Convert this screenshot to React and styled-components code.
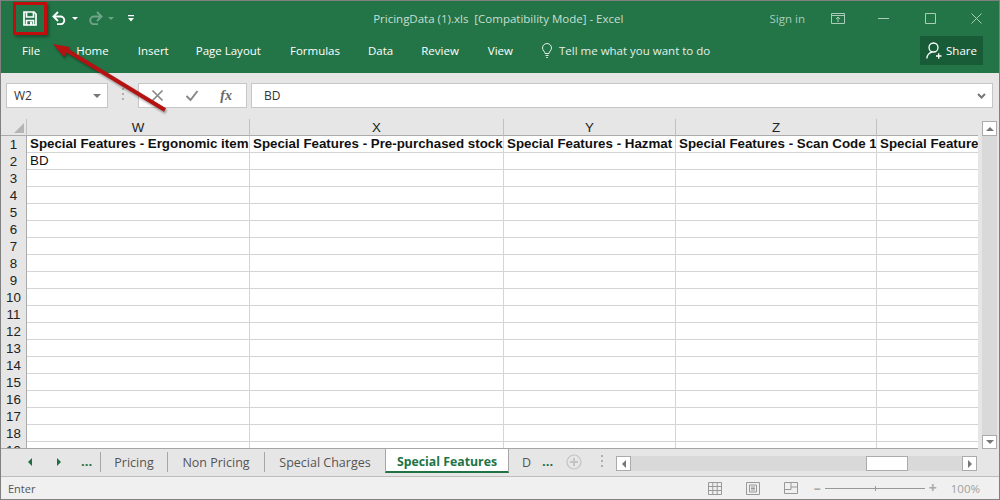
import React from "react";
import styled, { createGlobalStyle } from "styled-components";

const GlobalStyle = createGlobalStyle`
  html, body { margin: 0; padding: 0; background: #e6e6e6; overflow: hidden; }
`;

const Win = styled.div`
  position: relative;
  width: 1000px;
  height: 500px;
  box-sizing: border-box;
  border: 1px solid #808080;
  display: flex;
  flex-direction: column;
  font-family: "Open Sans", "Noto Sans", sans-serif;
  overflow: hidden;
`;

const Ribbon = styled.div`
  height: 72px;
  background: #237548;
  color: #fff;
  display: flex;
  flex-direction: column;
  flex: none;
`;

const TitleRow = styled.div`
  height: 34px;
  display: flex;
  align-items: center;
  position: relative;
`;

const Qat = styled.div`
  display: flex;
  align-items: center;
  padding-left: 22px;
  height: 100%;
`;

const QatBtn = styled.span`
  display: inline-flex;
  align-items: center;
  margin-right: ${(p) => p.$mr || 0}px;
  opacity: ${(p) => (p.$dim ? 0.35 : 1)};
`;

const DocTitle = styled.div`
  flex: 1;
  text-align: center;
  font-size: 11.5px;
  color: #c9dfd2;
  padding-left: 93px;
  white-space: pre;
`;

const WinControls = styled.div`
  display: flex;
  align-items: center;
  color: #a9cdb8;
`;

const SignIn = styled.span`
  font-size: 11.5px;
  margin-right: 26px;
`;

const CtlIcon = styled.svg`
  display: block;
  margin-right: ${(p) => p.$mr}px;
`;

const MenuRow = styled.div`
  flex: 1;
  display: flex;
  align-items: center;
  position: relative;
  padding: 0 0 8px 21px;
  font-size: 11.5px;
`;

const MenuItem = styled.span`
  margin-right: ${(p) => p.$mr}px;
  white-space: nowrap;
`;

const TellMe = styled.span`
  display: inline-flex;
  align-items: center;
  gap: 6px;
  color: #e4efe9;
`;

const ShareBtn = styled.div`
  position: absolute;
  right: 16px;
  top: 1px;
  width: 63px;
  height: 29px;
  background: #185c37;
  display: flex;
  align-items: center;
  justify-content: center;
  gap: 4px;
  font-size: 11.5px;
`;

const FormulaBar = styled.div`
  height: 46px;
  flex: none;
  background: #e6e6e6;
  display: flex;
  align-items: flex-start;
  padding: 10px 0 0 5px;
  box-sizing: border-box;
`;

const Field = styled.div`
  height: 25px;
  box-sizing: border-box;
  background: #fff;
  border: 1px solid #c6c6c6;
  display: flex;
  align-items: center;
  font-size: 12px;
  color: #333;
`;

const NameBox = styled(Field)`
  width: 102px;
  padding: 0 6px 0 7px;
  justify-content: space-between;
`;

const Grip = styled.div`
  width: 2px;
  height: 14px;
  margin: 5px 14px 0 14px;
  background: repeating-linear-gradient(#b0b0b0 0 2px, transparent 2px 5px);
`;

const FxBox = styled(Field)`
  width: 109px;
  margin-right: 4px;
  justify-content: space-between;
  padding: 0 14px 0 12px;
  color: #777;
`;

const FxLabel = styled.i`
  font-family: "Liberation Serif", serif;
  font-size: 14px;
  font-weight: bold;
  color: #666;
`;

const FormulaInput = styled(Field)`
  width: 742px;
  padding: 0 6px 0 12px;
  justify-content: space-between;
`;

const SheetArea = styled.div`
  height: 330px;
  flex: none;
  display: flex;
  position: relative;
  background: #e6e6e6;
`;

const GridClip = styled.div`
  width: 977px;
  height: 330px;
  box-sizing: border-box;
  border-bottom: 1px solid #a6a6a6;
  overflow: hidden;
  flex: none;
`;

const SheetGrid = styled.div`
  display: grid;
  grid-template-columns: 26px 223px 254px 172px 201px 102px;
  grid-template-rows: 17px repeat(19, 17px);
  font-family: "Liberation Sans", Arial, sans-serif;
  font-size: 13.33px;
  color: #111;
`;

const Corner = styled.div`
  background: #e6e6e6;
  border-right: 1px solid #c0c0c0;
  border-bottom: 1px solid #ababab;
  position: relative;
  &::after {
    content: "";
    position: absolute;
    right: 2px;
    bottom: 2px;
    border-style: solid;
    border-width: 0 0 10px 10px;
    border-color: transparent transparent #b5b5b5 transparent;
  }
`;

const ColHead = styled.div`
  background: #e6e6e6;
  border-right: 1px solid #c0c0c0;
  border-bottom: 1px solid #ababab;
  text-align: center;
  line-height: 17px;
  box-sizing: border-box;
  color: #222;
`;

const RowHead = styled.div`
  background: #e6e6e6;
  border-right: 1px solid #ababab;
  text-align: center;
  line-height: 17px;
  color: #222;
`;

const Cell = styled.div`
  background: #fff;
  border-right: 1px solid #d4d4d4;
  border-bottom: 1px solid #d4d4d4;
  box-sizing: border-box;
  overflow: hidden;
  white-space: nowrap;
  line-height: 16px;
  padding-left: 3px;
  font-weight: ${(p) => (p.$bold ? 700 : 400)};
`;

const VScroll = styled.div`
  width: 15px;
  height: 328px;
  margin: 2px 0 0 4px;
  background: #d9d9d9;
  display: flex;
  flex-direction: column;
  justify-content: space-between;
`;

const ScrollBtn = styled.div`
  width: ${(p) => p.$w || 15}px;
  height: ${(p) => p.$h || 15}px;
  box-sizing: border-box;
  background: #fff;
  border: 1px solid #ababab;
  display: flex;
  align-items: center;
  justify-content: center;
  flex: none;
`;

const Tri = styled.span`
  width: 0;
  height: 0;
  border-style: solid;
  border-color: transparent;
  border-width: ${(p) => p.$s || 4}px;
  margin-left: ${(p) => p.$ml || 0}px;
  ${(p) => p.$dir === "up" && `border-bottom-color: ${p.$c || "#777"}; border-top-width: 0;`}
  ${(p) => p.$dir === "down" && `border-top-color: ${p.$c || "#777"}; border-bottom-width: 0;`}
  ${(p) => p.$dir === "left" && `border-right-color: ${p.$c || "#777"}; border-left-width: 0;`}
  ${(p) => p.$dir === "right" && `border-left-color: ${p.$c || "#777"}; border-right-width: 0;`}
`;

const TabBar = styled.div`
  height: 28px;
  flex: none;
  box-sizing: border-box;
  border-bottom: 1px solid #bdbdbd;
  background: #e6e6e6;
  display: flex;
  align-items: flex-start;
  font-size: 12.5px;
  color: #555;
`;

const TabNav = styled.div`
  width: 100px;
  height: 20px;
  margin-top: 3px;
  display: flex;
  align-items: center;
  padding-left: 27px;
  box-sizing: border-box;
  border-right: 1px solid #a6a6a6;
  flex: none;
`;

const Dots = styled.span`
  color: #1e6e42;
  font-weight: 700;
  font-size: 13px;
  line-height: 20px;
  margin-left: ${(p) => p.$ml}px;
  padding-bottom: 2px;
`;

const Tab = styled.div`
  width: ${(p) => p.$w}px;
  height: 20px;
  margin-top: 3px;
  flex: none;
  display: flex;
  align-items: center;
  justify-content: center;
  box-sizing: border-box;
  border-right: ${(p) => (p.$last ? "none" : "1px solid #a6a6a6")};
`;

const ActiveTab = styled.div`
  width: 124px;
  height: 24px;
  flex: none;
  box-sizing: border-box;
  padding-top: 2px;
  background: #fff;
  border-left: 1px solid #a6a6a6;
  border-right: 1px solid #a6a6a6;
  border-bottom: 2px solid #217346;
  color: #217346;
  font-weight: 700;
  font-size: 12.3px;
  display: flex;
  align-items: center;
  justify-content: center;
`;

const MoreTabs = styled.div`
  display: flex;
  align-items: center;
  height: 20px;
  margin-top: 3px;
  padding-left: 13px;
  flex: none;
  width: 107px;
  box-sizing: border-box;
`;

const AddSheet = styled.svg`
  margin-left: 13px;
  flex: none;
`;

const TabGrip = styled(Grip)`
  margin: 0 0 0 19px;
`;

const HScroll = styled.div`
  width: 361px;
  height: 15px;
  margin-top: 7px;
  background: #d9d9d9;
  display: flex;
  justify-content: space-between;
  position: relative;
  flex: none;
`;

const Thumb = styled.div`
  position: absolute;
  left: 250px;
  top: 0;
  width: 42px;
  height: 15px;
  box-sizing: border-box;
  background: #fff;
  border: 1px solid #ababab;
`;

const StatusBar = styled.div`
  flex: 1;
  background: #f0f0f0;
  display: flex;
  align-items: center;
  padding-left: 7px;
  font-size: 11px;
  color: #555;
  position: relative;
`;

const StatusRight = styled.div`
  margin-left: auto;
  display: flex;
  align-items: center;
  color: #a0a0a0;
  padding-right: 19px;
`;

const ViewIcon = styled.svg`
  margin-right: ${(p) => p.$mr}px;
  flex: none;
`;

const ZoomTrack = styled.div`
  width: 100px;
  height: 1px;
  background: #999;
  margin: 0 4px;
  position: relative;
  &::after {
    content: "";
    position: absolute;
    left: 50px;
    top: -2px;
    width: 1px;
    height: 5px;
    background: #999;
  }
`;

const ZoomSign = styled.span`
  font-size: 14px;
  font-weight: 700;
  line-height: 14px;
  color: #aaa;
`;

const ZoomPct = styled.span`
  font-size: 11.5px;
  margin-left: 14px;
`;

const Callout = styled.div`
  position: absolute;
  left: 12px;
  top: 1px;
  width: 34px;
  height: 33px;
  box-sizing: border-box;
  border: 3px solid #c00d0d;
  box-shadow: 2px 2px 3px rgba(0, 0, 0, 0.35);
`;

const ArrowSvg = styled.svg`
  position: absolute;
  left: 40px;
  top: 30px;
  overflow: visible;
  filter: drop-shadow(1px 2px 1px rgba(0, 0, 0, 0.35));
`;

const columns = ["W", "X", "Y", "Z", ""];
const headers = [
  "Special Features - Ergonomic item",
  "Special Features - Pre-purchased stock",
  "Special Features - Hazmat",
  "Special Features - Scan Code 1",
  "Special Features - Scan",
];

function Row({ n }) {
  return (
    <>
      <RowHead>{n}</RowHead>
      {headers.map((h, i) => (
        <Cell key={i} $bold={n === 1}>
          {n === 1 ? h : n === 2 && i === 0 ? "BD" : ""}
        </Cell>
      ))}
    </>
  );
}

export default function App() {
  const rows = Array.from({ length: 19 }, (_, i) => i + 1);
  return (
    <Win>
      <GlobalStyle />
      <Ribbon>
        <TitleRow>
          <Qat>
            <QatBtn $mr={15}>
              <svg width="14" height="15" viewBox="0 0 14 15" fill="none" stroke="#fff" strokeWidth="1.7">
                <path d="M1 1h10l2 2v11H1z" />
                <path d="M3.5 1v5h7V1" />
                <path d="M3.5 14v-4.500h7V14" />
                <path d="M7 10.500h2V14H7z" fill="#fff" stroke="none" />
              </svg>
            </QatBtn>
            <QatBtn $mr={6}>
              <svg width="14" height="14" viewBox="0 0 14 14" fill="none" stroke="#fff" strokeWidth="1.9">
                <path d="M2 5.500h6.500a3.800 3.800 0 0 1 0 7.600H5" />
                <path d="M6 1L1.500 5.500 6 10" />
              </svg>
            </QatBtn>
            <QatBtn $mr={10}>
              <Tri $dir="down" $c="#fff" $s={3} />
            </QatBtn>
            <QatBtn $dim $mr={5}>
              <svg width="15" height="14" viewBox="0 0 15 14" fill="none" stroke="#fff" strokeWidth="1.9">
                <path d="M13 5.500H6a3.800 3.800 0 0 0 0 7.600h4" />
                <path d="M9 1l4.500 4.500L9 10" />
              </svg>
            </QatBtn>
            <QatBtn $dim $mr={14}>
              <Tri $dir="down" $c="#fff" $s={3} />
            </QatBtn>
            <QatBtn>
              <svg width="6" height="7" viewBox="0 0 6 7" fill="#fff">
                <path d="M0 0h6v1.300H0zM0 3h6L3 6.500z" />
              </svg>
            </QatBtn>
          </Qat>
          <DocTitle>PricingData (1).xls  [Compatibility Mode] - Excel</DocTitle>
          <WinControls>
            <SignIn>Sign in</SignIn>
            <CtlIcon $mr={33} width="14" height="11" viewBox="0 0 14 11" fill="none" stroke="#a9cdb8">
              <path d="M.5.5h13v10H.5zM.5 2.500h13M7 9V4.500M5 6l2-2 2 2" />
            </CtlIcon>
            <CtlIcon $mr={36} width="11" height="11" viewBox="0 0 11 11" fill="none" stroke="#a9cdb8">
              <path d="M0 5.500h11" />
            </CtlIcon>
            <CtlIcon $mr={35} width="11" height="11" viewBox="0 0 11 11" fill="none" stroke="#a9cdb8">
              <path d="M.5.5h10v10H.5z" />
            </CtlIcon>
            <CtlIcon $mr={17} width="11" height="11" viewBox="0 0 11 11" fill="none" stroke="#a9cdb8">
              <path d="M.5.5l10 10M10.500.5l-10 10" />
            </CtlIcon>
          </WinControls>
        </TitleRow>
        <MenuRow>
          <MenuItem $mr={36}>File</MenuItem>
          <MenuItem $mr={29}>Home</MenuItem>
          <MenuItem $mr={27}>Insert</MenuItem>
          <MenuItem $mr={29}>Page Layout</MenuItem>
          <MenuItem $mr={28}>Formulas</MenuItem>
          <MenuItem $mr={28}>Data</MenuItem>
          <MenuItem $mr={29}>Review</MenuItem>
          <MenuItem $mr={28}>View</MenuItem>
          <TellMe>
            <svg width="12" height="15" viewBox="0 0 12 15" fill="none" stroke="#e4efe9">
              <path d="M4 10.500C4 8.500 1.500 7.600 1.500 5a4.500 4.500 0 0 1 9 0c0 2.600-2.500 3.500-2.500 5.500z" />
              <path d="M4.500 12.500h3M5.200 14.500h1.600" />
            </svg>
            Tell me what you want to do
          </TellMe>
          <ShareBtn>
            <svg width="16" height="17" viewBox="0 0 16 17" fill="none" stroke="#fff" strokeWidth="1.300">
              <circle cx="7.500" cy="5.500" r="4.500" />
              <path d="M.8 16.500c.4-3.500 2.600-5.800 5.400-6.300M10 14h5.500M12.700 11.200v5.600" />
            </svg>
            Share
          </ShareBtn>
        </MenuRow>
      </Ribbon>

      <FormulaBar>
        <NameBox>
          W2
          <Tri $dir="down" />
        </NameBox>
        <Grip />
        <FxBox>
          <svg width="13" height="13" viewBox="0 0 13 13" stroke="#888" strokeWidth="1.700" fill="none">
            <path d="M1.500 1.500l10 10M11.500 1.500l-10 10" />
          </svg>
          <svg width="14" height="13" viewBox="0 0 14 13" stroke="#888" strokeWidth="2" fill="none">
            <path d="M1.500 7l4 4 7-9" />
          </svg>
          <FxLabel>fx</FxLabel>
        </FxBox>
        <FormulaInput>
          BD
          <svg width="9" height="6" viewBox="0 0 9 6" stroke="#777" strokeWidth="2" fill="none">
            <path d="M1 1l3.500 3.500L8 1" />
          </svg>
        </FormulaInput>
      </FormulaBar>

      <SheetArea>
        <GridClip>
          <SheetGrid>
            <Corner />
            {columns.map((c, i) => (
              <ColHead key={i}>{c}</ColHead>
            ))}
            {rows.map((n) => (
              <Row key={n} n={n} />
            ))}
          </SheetGrid>
        </GridClip>
        <VScroll>
          <ScrollBtn $h={15}>
            <Tri $dir="up" />
          </ScrollBtn>
          <ScrollBtn $h={14}>
            <Tri $dir="down" />
          </ScrollBtn>
        </VScroll>
      </SheetArea>

      <TabBar>
        <TabNav>
          <Tri $dir="left" $c="#1e6e42" />
          <Tri $dir="right" $c="#1e6e42" $ml={25} />
          <Dots $ml={20}>...</Dots>
        </TabNav>
        <Tab $w={67}>Pricing</Tab>
        <Tab $w={97}>Non Pricing</Tab>
        <Tab $w={120} $last>Special Charges</Tab>
        <ActiveTab>Special Features</ActiveTab>
        <MoreTabs>
          D
          <Dots $ml={11}>...</Dots>
          <AddSheet width="16" height="16" viewBox="0 0 16 16" fill="none" stroke="#c4c4c4" strokeWidth="1.200">
            <circle cx="8" cy="8" r="7" />
            <path d="M8 4v8M4 8h8" strokeWidth="2" />
          </AddSheet>
          <TabGrip />
        </MoreTabs>
        <HScroll>
          <ScrollBtn>
            <Tri $dir="left" />
          </ScrollBtn>
          <Thumb />
          <ScrollBtn>
            <Tri $dir="right" />
          </ScrollBtn>
        </HScroll>
      </TabBar>

      <StatusBar>
        Enter
        <StatusRight>
          <ViewIcon $mr={24} width="14" height="13" viewBox="0 0 14 13" fill="none" stroke="#999">
            <path d="M.5.500h13v12H.5zM.5 4.500h13M.5 8.500h13M4.800.5v12M9.200.5v12" />
          </ViewIcon>
          <ViewIcon $mr={24} width="14" height="13" viewBox="0 0 14 13" fill="none" stroke="#999">
            <path d="M.5.500h13v12H.5zM3.500 3h7v7h-7zM5 5h4M5 6.500h4M5 8h4" />
          </ViewIcon>
          <ViewIcon $mr={16} width="14" height="13" viewBox="0 0 14 13" fill="none" stroke="#999">
            <path d="M.5.500h13v11H.5zM.5 7.500h6.500V.5M7 5h6.500" />
          </ViewIcon>
          <ZoomSign>–</ZoomSign>
          <ZoomTrack />
          <ZoomSign>+</ZoomSign>
          <ZoomPct>100%</ZoomPct>
        </StatusRight>
      </StatusBar>

      <Callout />
      <ArrowSvg width="130" height="85" viewBox="0 0 130 85">
        <path d="M124 79 L22 17" stroke="#b51212" strokeWidth="4" fill="none" />
        <path d="M12 13 L29 16 L23 26 Z" fill="#b51212" />
      </ArrowSvg>
    </Win>
  );
}
